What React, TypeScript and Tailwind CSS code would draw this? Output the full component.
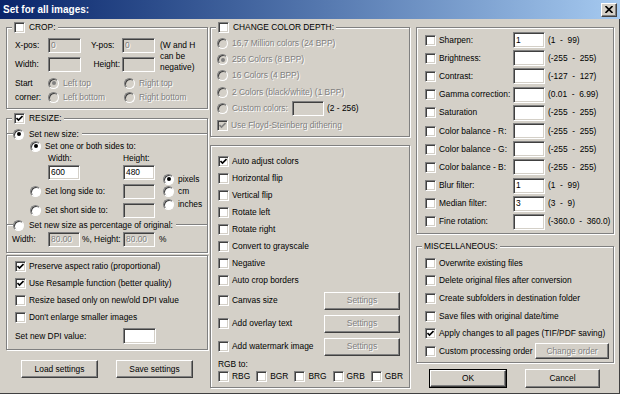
import type { ReactNode } from "react"

const SUNKEN =
  "border border-t-[#808080] border-l-[#808080] border-b-white border-r-white shadow-[inset_1px_1px_0_#404040,inset_-1px_-1px_0_#d4d0c8]"
const RAISED =
  "border border-t-white border-l-white border-b-[#404040] border-r-[#404040] shadow-[inset_-1px_-1px_0_#808080] bg-[#d4d0c8]"
const GREY = "text-[#808080] [text-shadow:1px_1px_0_#fff]"

function Check({ on = false, dim = false }: { on?: boolean; dim?: boolean }) {
  return (
    <span
      className={`w-[11px] h-[11px] shrink-0 flex items-center justify-center ${SUNKEN} ${
        dim ? "bg-[#d4d0c8]" : "bg-white"
      }`}
    >
      {on && (
        <svg width="7" height="7" viewBox="0 0 7 7">
          <path d="M0.5 3 L2.5 5 L6.5 1" fill="none" stroke={dim ? "#808080" : "#000"} strokeWidth="1.6" />
        </svg>
      )}
    </span>
  )
}

function Radio({ on = false, dim = false }: { on?: boolean; dim?: boolean }) {
  return (
    <span
      className={`w-[11px] h-[11px] shrink-0 rounded-full flex items-center justify-center border border-t-[#808080] border-l-[#808080] border-b-white border-r-white shadow-[inset_1px_1px_0_#404040] ${
        dim ? "bg-[#d4d0c8]" : "bg-white"
      }`}
    >
      {on && <span className={`w-[4px] h-[4px] rounded-full ${dim ? "bg-[#808080]" : "bg-black"}`} />}
    </span>
  )
}

function Edit({ value = "", dim = false, className = "" }: { value?: string; dim?: boolean; className?: string }) {
  return (
    <span
      className={`${SUNKEN} ${dim ? "bg-[#d4d0c8] " + GREY : "bg-white"} flex items-center px-[2px] shrink-0 ${className}`}
    >
      {value}
    </span>
  )
}

function Btn({ children, dim = false, className = "" }: { children: ReactNode; dim?: boolean; className?: string }) {
  return (
    <span className={`${RAISED} flex items-center justify-center shrink-0 ${dim ? GREY : ""} ${className}`}>
      {children}
    </span>
  )
}

function Group({ title, className = "", children }: { title?: ReactNode; className?: string; children?: ReactNode }) {
  return (
    <div className={`relative border border-[#808080] shadow-[inset_1px_1px_0_#fff,1px_1px_0_#fff] ${className}`}>
      {title && (
        <div className="absolute -top-[7px] left-[5px] px-[2px] bg-[#d4d0c8] flex items-center gap-[4px] h-[13px]">
          {title}
        </div>
      )}
      {children}
    </div>
  )
}

function CheckRow({ label, on = false, dim = false, className = "" }: { label: string; on?: boolean; dim?: boolean; className?: string }) {
  return (
    <div className={`flex items-center gap-[3px] ${className}`}>
      <Check on={on} dim={dim} />
      <span className={`whitespace-nowrap ${dim ? GREY : ""}`}>{label}</span>
    </div>
  )
}

function RadioRow({ label, on = false, dim = false, className = "" }: { label: string; on?: boolean; dim?: boolean; className?: string }) {
  return (
    <div className={`flex items-center gap-[4px] ${className}`}>
      <Radio on={on} dim={dim} />
      <span className={`whitespace-nowrap ${dim ? GREY : ""}`}>{label}</span>
    </div>
  )
}

function Line({ className = "" }: { className?: string }) {
  return <span className={`h-0 border-t border-t-[#808080] border-b border-b-white ${className}`} />
}

const filters = [
  ["Sharpen:", "1", "(1  -  99)"],
  ["Brightness:", "", "(-255  -  255)"],
  ["Contrast:", "", "(-127  -  127)"],
  ["Gamma correction:", "", "(0.01  -  6.99)"],
  ["Saturation", "", "(-255  -  255)"],
  ["Color balance - R:", "", "(-255  -  255)"],
  ["Color balance - G:", "", "(-255  -  255)"],
  ["Color balance - B:", "", "(-255  -  255)"],
  ["Blur filter:", "1", "(1  -  99)"],
  ["Median filter:", "3", "(3  -  9)"],
  ["Fine rotation:", "", "(-360.0  -  360.0)"],
]

const ops = [
  "Auto adjust colors",
  "Horizontal flip",
  "Vertical flip",
  "Rotate left",
  "Rotate right",
  "Convert to grayscale",
  "Negative",
  "Auto crop borders",
]

const misc = [
  "Overwrite existing files",
  "Delete original files after conversion",
  "Create subfolders in destination folder",
  "Save files with original date/time",
  "Apply changes to all pages (TIF/PDF saving)",
]

export default function App() {
  return (
    <div className="w-[620px] h-[394px] bg-[#d4d0c8] overflow-hidden flex flex-col font-['Liberation_Sans',Arial,sans-serif] text-black text-[8.4px] leading-[11px] shadow-[inset_-1px_-1px_0_#404040]">
      {/* Title bar */}
      <div className="h-[19px] shrink-0 flex items-center justify-between pl-[3px] pr-[3px] bg-gradient-to-r from-[#0a246a] to-[#a6caf0]">
        <span className="text-white font-bold text-[10px]">Set for all images:</span>
        <Btn className="w-[16px] h-[14px]">
          <svg width="8" height="7" viewBox="0 0 8 7">
            <path d="M0.5 0 L7.5 7 M7.5 0 L0.5 7" stroke="#000" strokeWidth="1.6" />
          </svg>
        </Btn>
      </div>

      <div className="flex pl-[6px]">
        {/* Left column */}
        <div className="w-[202px] flex flex-col">
          <Group className="mt-[8px] h-[82px]" title={<><Check /><span>CROP:</span></>}>
            <div className="flex pt-[10px] pl-[8px]">
              <div className="flex flex-col gap-[4px]">
                <div className="flex items-center">
                  <span className="w-[33px]">X-pos:</span>
                  <Edit dim value="0" className="w-[33px] h-[15px]" />
                  <span className="w-[31px] ml-[10px]">Y-pos:</span>
                  <Edit dim value="0" className="w-[33px] h-[15px]" />
                </div>
                <div className="flex items-center">
                  <span className="w-[33px]">Width:</span>
                  <Edit dim className="w-[33px] h-[15px]" />
                  <span className="w-[31px] ml-[10px] text-right pr-[2px]">Height:</span>
                  <Edit dim className="w-[33px] h-[15px]" />
                </div>
              </div>
              <div className="ml-[5px] mt-[2px] leading-[11px]">
                (W and H<br />can be<br />negative)
              </div>
            </div>
            <div className="flex pl-[8px] mt-[3px]">
              <div className="w-[33px] leading-[14px]">
                Start
                <br />
                corner:
              </div>
              <div className="w-[76px] flex flex-col">
                <RadioRow dim on label="Left top" className="h-[14px]" />
                <RadioRow dim label="Left bottom" className="h-[14px]" />
              </div>
              <div className="flex flex-col">
                <RadioRow dim label="Right top" className="h-[14px]" />
                <RadioRow dim label="Right bottom" className="h-[14px]" />
              </div>
            </div>
          </Group>

          <Group className="mt-[9px] h-[135px]" title={<><Check on /><span>RESIZE:</span></>}>
            <div className="flex items-center h-[12px] mt-[9px]">
              <Line className="w-[6px]" />
              <div className="flex items-center gap-[5px]">
                <Radio on />
                <span>Set new size:</span>
              </div>
              <Line className="flex-1 ml-[3px]" />
            </div>
            <RadioRow on label="Set one or both sides to:" className="h-[12px] pl-[23px]" />
            <div className="flex items-center h-[12px] pl-[41px]">
              <span className="w-[75px]">Width:</span>
              <span>Height:</span>
            </div>
            <div className="flex mt-[1px]">
              <div className="flex flex-col gap-[4px]">
                <div className="flex items-center h-[15px] pl-[41px]">
                  <Edit value="600" className="w-[32px] h-[15px]" />
                  <span className="w-[43px]" />
                  <Edit value="480" className="w-[32px] h-[15px]" />
                </div>
                <div className="flex items-center h-[15px] pl-[23px]">
                  <RadioRow label="Set long side to:" className="w-[93px]" />
                  <Edit dim className="w-[32px] h-[15px]" />
                </div>
                <div className="flex items-center h-[15px] pl-[23px]">
                  <RadioRow label="Set short side to:" className="w-[93px]" />
                  <Edit dim className="w-[32px] h-[15px]" />
                </div>
              </div>
              <div className="flex flex-col ml-[8px] mt-[8px]">
                <RadioRow on label="pixels" className="h-[12.5px]" />
                <RadioRow label="cm" className="h-[12.5px]" />
                <RadioRow label="inches" className="h-[12.5px]" />
              </div>
            </div>
            <div className="flex items-center h-[12px] mt-[1px]">
              <Line className="w-[6px]" />
              <div className="flex items-center gap-[5px]">
                <Radio />
                <span>Set new size as percentage of original:</span>
              </div>
              <Line className="flex-1 ml-[3px]" />
            </div>
            <div className="flex items-center h-[15px] mt-[1px] pl-[5px]">
              <span className="w-[36px]">Width:</span>
              <Edit dim value="80.00" className="w-[32px] h-[15px]" />
              <span className="w-[43px] pl-[2px]">%, Height:</span>
              <Edit dim value="80.00" className="w-[32px] h-[15px]" />
              <span className="ml-[4px]">%</span>
            </div>
          </Group>

          <Group className="mt-[2px] h-[95px]">
            <div className="flex flex-col pt-[2px] pl-[8px]">
              <CheckRow on label="Preserve aspect ratio (proportional)" className="h-[17px]" />
              <CheckRow on label="Use Resample function (better quality)" className="h-[17px]" />
              <CheckRow label="Resize based only on new/old DPI value" className="h-[17px]" />
              <CheckRow label="Don't enlarge smaller images" className="h-[17px]" />
              <div className="flex items-center h-[16px] mt-[2px]">
                <span className="w-[108px]">Set new DPI value:</span>
                <Edit className="w-[33px] h-[16px]" />
              </div>
            </div>
          </Group>

          <div className="flex mt-[10px] pl-[15px] gap-[18px]">
            <Btn className="w-[77px] h-[18px]">Load settings</Btn>
            <Btn className="w-[77px] h-[18px]">Save settings</Btn>
          </div>
        </div>

        {/* Middle column */}
        <div className="w-[200px] ml-[2px] flex flex-col">
          <Group className="mt-[8px] h-[110px]" title={<><Check /><span>CHANGE COLOR DEPTH:</span></>}>
            <div className="flex flex-col pt-[7px] pl-[6px]">
              <RadioRow dim label="16,7 Million colors (24 BPP)" className="h-[16.4px]" />
              <RadioRow dim on label="256 Colors (8 BPP)" className="h-[16.4px]" />
              <RadioRow dim label="16 Colors (4 BPP)" className="h-[16.4px]" />
              <RadioRow dim label="2 Colors (black/white) (1 BPP)" className="h-[16.4px]" />
              <div className="flex items-center h-[16.4px]">
                <RadioRow dim label="Custom colors:" className="w-[75px]" />
                <Edit dim className="w-[32px] h-[15px]" />
                <span className="ml-[3px]">(2 - 256)</span>
              </div>
              <CheckRow dim on label="Use Floyd-Steinberg dithering" className="h-[16.4px]" />
            </div>
          </Group>

          <Group className="mt-[8px] h-[243px]">
            <div className="flex flex-col pt-[7px] pl-[7px]">
              {ops.map((o, i) => (
                <CheckRow key={o} on={i === 0} label={o} className="h-[17px]" />
              ))}
              {["Canvas size", "Add overlay text", "Add watermark image"].map((o) => (
                <div key={o} className="flex items-center h-[23px]">
                  <CheckRow label={o} className="w-[106px]" />
                  <Btn dim className="w-[76px] h-[18px]">
                    Settings
                  </Btn>
                </div>
              ))}
              <div className="h-[12px] flex items-center">RGB to:</div>
              <div className="flex items-center h-[13px]">
                {["RBG", "BGR", "BRG", "GRB", "GBR"].map((c) => (
                  <CheckRow key={c} label={c} className="w-[38.5px]" />
                ))}
              </div>
            </div>
          </Group>
        </div>

        {/* Right column */}
        <div className="w-[198px] ml-[6px] flex flex-col">
          <Group className="mt-[8px] h-[207px]">
            <div className="flex flex-col pt-[3px] pl-[8px]">
              {filters.map(([label, val, range]) => (
                <div key={label} className="flex items-center h-[18.2px]">
                  <CheckRow label={label} className="w-[88px]" />
                  <Edit value={val} className="w-[32px] h-[16px]" />
                  <span className="ml-[3px] whitespace-pre">{range}</span>
                </div>
              ))}
            </div>
          </Group>

          <Group className="mt-[12px] h-[117px]" title={<span>MISCELLANEOUS:</span>}>
            <div className="flex flex-col pt-[7.5px] pl-[8px]">
              {misc.map((m, i) => (
                <CheckRow key={m} on={i === 4} label={m} className="h-[17.6px]" />
              ))}
              <div className="flex items-center h-[17.6px]">
                <CheckRow label="Custom processing order" className="w-[110px]" />
                <Btn dim className="w-[74px] h-[16px]">
                  Change order
                </Btn>
              </div>
            </div>
          </Group>

          <div className="flex mt-[6px] pl-[13px]">
            <span className="w-[78px] h-[19px] border border-black flex">
              <Btn className="flex-1 h-full">OK</Btn>
            </span>
            <Btn className="w-[75px] h-[19px] ml-[18px]">Cancel</Btn>
          </div>
        </div>
      </div>
    </div>
  )
}
